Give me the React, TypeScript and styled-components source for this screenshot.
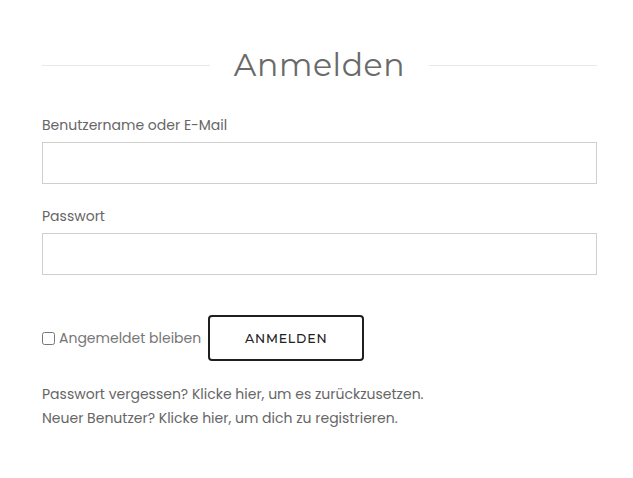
import React from "react";
import styled, { createGlobalStyle } from "styled-components";

const Global = createGlobalStyle`
  html, body { margin: 0; padding: 0; background: #fff; }
  body { font-family: "Poppins", "Open Sans", "Liberation Sans", sans-serif; }
`;

const Page = styled.div`
  width: 633px;
  height: 478px;
  box-sizing: border-box;
  padding: 44px 36px 0 42px;
`;

const TitleRow = styled.div`
  display: flex;
  align-items: center;
  gap: 24px;
  height: 42px;
`;

const Rule = styled.div`
  flex: 1;
  height: 1px;
  background: #e8e8e8;
`;

const Title = styled.h2`
  margin: 0;
  font-family: "Montserrat", "Lato", "Open Sans", sans-serif;
  font-weight: 400;
  font-size: 31.5px;
  letter-spacing: 0.6px;
  color: #6a6a6a;
  line-height: 42px;
`;

const Field = styled.div`
  display: flex;
  flex-direction: column;
  margin-top: ${(p: { $top: number }) => p.$top}px;
`;

const Label = styled.label`
  font-size: 14px;
  color: #666;
  line-height: 20px;
  margin-bottom: 7px;
`;

const Input = styled.input`
  box-sizing: border-box;
  width: 555px;
  height: 42px;
  border: 1px solid #cfcfcf;
  border-radius: 0;
  outline: none;
  padding: 0 10px;
  font-size: 14px;
`;

const ActionRow = styled.div`
  display: flex;
  align-items: center;
  margin-top: 40px;
  gap: 7px;
`;

const Check = styled.label`
  display: flex;
  align-items: center;
  gap: 4px;
  font-size: 14px;
  color: #777;
`;

const Box = styled.input`
  margin: 0;
  width: 13px;
  height: 13px;
`;

const Button = styled.button`
  box-sizing: border-box;
  width: 156px;
  height: 46px;
  border: 2px solid #1f1f1f;
  border-radius: 4px;
  background: #fff;
  font-family: "Montserrat", "Lato", "Open Sans", sans-serif;
  font-size: 12.5px;
  font-weight: 500;
  letter-spacing: 0.8px;
  color: #222;
  cursor: pointer;
`;

const Links = styled.div`
  margin-top: 21px;
  font-size: 14px;
  line-height: 24px;
  color: #666;
`;

export default function App() {
  return (
    <>
      <Global />
      <Page>
        <TitleRow>
          <Rule />
          <Title>Anmelden</Title>
          <Rule />
        </TitleRow>
        <Field $top={29}>
          <Label>Benutzername oder E-Mail</Label>
          <Input type="text" />
        </Field>
        <Field $top={22}>
          <Label>Passwort</Label>
          <Input type="password" />
        </Field>
        <ActionRow>
          <Check>
            <Box type="checkbox" />
            Angemeldet bleiben
          </Check>
          <Button>ANMELDEN</Button>
        </ActionRow>
        <Links>
          <div>Passwort vergessen? Klicke hier, um es zurückzusetzen.</div>
          <div>Neuer Benutzer? Klicke hier, um dich zu registrieren.</div>
        </Links>
      </Page>
    </>
  );
}
